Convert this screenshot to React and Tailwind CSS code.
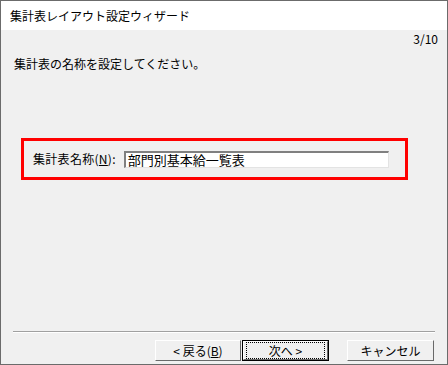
import React from 'react';

const font = { fontFamily: '"Noto Sans CJK JP", "Liberation Sans", sans-serif' };

const Btn = ({ children, focus, w }) => (
  <div className={`h-[21px] ${w} ${focus ? 'border border-black' : ''}`}>
    <div className="h-full w-full border border-t-white border-l-white border-r-[#696969] border-b-[#696969] bg-[#f0f0f0] flex items-center justify-center">
      <div className={`h-full w-full flex items-center justify-center text-[12px] text-black ${focus ? 'm-[2px] border border-dotted border-black' : ''}`}>
        {children}
      </div>
    </div>
  </div>
);

export default function App() {
  return (
    <div className="w-[448px] h-[365px] border border-[#6b6b6b] bg-[#f0f0f0] flex flex-col text-black" style={font}>
      <div className="h-[29px] bg-white pl-[9px] flex items-center text-[12px] leading-none">
        集計表レイアウト設定ウィザード
      </div>
      <div className="flex justify-end pr-[9px] pt-[2px] text-[12px] leading-[14px]">3/10</div>
      <div className="pl-[13px] mt-[11px] text-[12px] leading-[14px]">集計表の名称を設定してください。</div>
      <div className="ml-[20px] mt-[67px] w-[387px] h-[42px] border-[3px] border-[#ff0000] flex items-center">
        <span className="ml-[9px] text-[12px] whitespace-nowrap tracking-[0.3px]">
          集計表名称(<span className="underline">N</span>):
        </span>
        <div className="ml-[8px] w-[265px] h-[17px] border-t-2 border-l-2 border-t-[#808080] border-l-[#808080] border-r border-b border-r-[#e3e3e3] border-b-[#e3e3e3] bg-white flex items-center pl-[2px] text-[13px] leading-none">
          部門別基本給一覧表
        </div>
      </div>
      <div className="flex-1" />
      <div className="mx-[12px] border-t border-t-[#a0a0a0] border-b border-b-white" />
      <div className="flex items-center mt-[7px] mb-[3px] pl-[154px]">
        <Btn w="w-[86px]">&lt; 戻る(<span className="underline">B</span>)</Btn>
        <div className="ml-[1px]">
          <Btn w="w-[87px]" focus>次へ &gt;</Btn>
        </div>
        <div className="ml-[18px]">
          <Btn w="w-[87px]">キャンセル</Btn>
        </div>
      </div>
    </div>
  );
}
